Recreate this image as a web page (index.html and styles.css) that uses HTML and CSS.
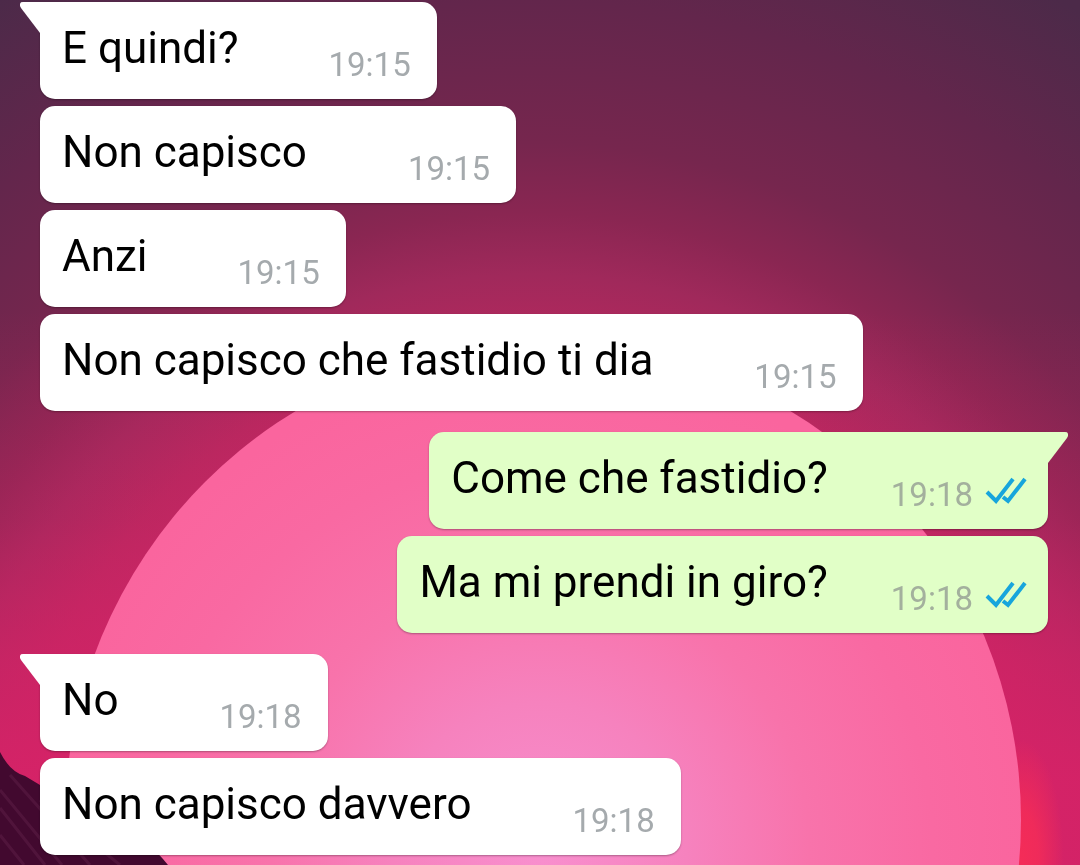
FILE: index.html
```html
<!DOCTYPE html>
<html lang="it">
<head>
    <meta charset="UTF-8">
    <meta name="viewport" content="width=device-width, initial-scale=1.0">
    <title>Chat</title>
    <link rel="stylesheet" href="styles.css">
</head>
<body>
    <!-- Sfondo -->
    <svg class="wallpaper" viewBox="0 0 1080 865" preserveAspectRatio="xMidYMid slice" aria-hidden="true">
        <defs>
            <radialGradient id="sky" gradientUnits="userSpaceOnUse" cx="530" cy="860" r="1010">
                <stop offset="0.45" stop-color="#be2862"/>
                <stop offset="0.51" stop-color="#b5285e"/>
                <stop offset="0.58" stop-color="#a0295b"/>
                <stop offset="0.64" stop-color="#8a2652"/>
                <stop offset="0.71" stop-color="#76264e"/>
                <stop offset="0.85" stop-color="#63264c"/>
                <stop offset="1" stop-color="#4c2a49"/>
            </radialGradient>
            <linearGradient id="dusk" x1="0" y1="0" x2="0" y2="1">
                <stop offset="0.36" stop-color="#d82268" stop-opacity="0"/>
                <stop offset="0.6" stop-color="#d82268" stop-opacity="0.25"/>
                <stop offset="0.76" stop-color="#d82268" stop-opacity="0.65"/>
                <stop offset="0.9" stop-color="#d82268" stop-opacity="0.9"/>
            </linearGradient>
            <radialGradient id="sun" gradientUnits="userSpaceOnUse" cx="540" cy="850" r="490">
                <stop offset="0" stop-color="#f88fce"/>
                <stop offset="0.3" stop-color="#f682be"/>
                <stop offset="0.55" stop-color="#f873ab"/>
                <stop offset="0.8" stop-color="#f969a2"/>
                <stop offset="1" stop-color="#fa659e"/>
            </radialGradient>
            <radialGradient id="glow" gradientUnits="userSpaceOnUse" cx="1022" cy="860" r="120" gradientTransform="translate(664 0) scale(0.35 1)">
                <stop offset="0" stop-color="#f42c58"/>
                <stop offset="0.4" stop-color="#f42c58" stop-opacity="0.85"/>
                <stop offset="1" stop-color="#f42c58" stop-opacity="0"/>
            </radialGradient>
        </defs>
        <rect width="1080" height="865" fill="url(#sky)"/>
        <rect width="1080" height="865" fill="url(#dusk)"/>
        <rect x="970" y="735" width="110" height="130" fill="url(#glow)"/>
        <circle cx="543" cy="820" r="478" fill="url(#sun)"/>
        <path d="M0 752 Q10 772 25 776 L40 785 Q80 800 115 820 Q150 842 168 865 H0Z" fill="#42092f"/>
        <path d="M0 790 L62 865 M0 808 L45 865 M10 775 L90 865 M0 835 L24 865 M40 800 L120 865" stroke="#66264f" stroke-width="3" opacity="0.4"/>
    </svg>

    <svg class="symbols" aria-hidden="true">
        <symbol id="tail" viewBox="0 0 22 33">
            <path d="M22 0 H3 Q-1 0 0 4 L1 6 L20 31 H22Z"/>
        </symbol>
        <symbol id="read" viewBox="0 0 42 30">
            <path d="M2 15 L11 24 L28 2 M18 20 L23 24 L40 2"/>
        </symbol>
    </svg>

    <main class="chat">
        <section class="group incoming">
            <div class="message first compact">
                <svg class="tail" aria-hidden="true"><use href="#tail"/></svg>
                <p class="text">E quindi?</p>
                <time class="time">19:15</time>
            </div>
            <div class="message">
                <p class="text">Non capisco</p>
                <time class="time">19:15</time>
            </div>
            <div class="message compact">
                <p class="text">Anzi</p>
                <time class="time">19:15</time>
            </div>
            <div class="message">
                <p class="text">Non capisco che fastidio ti dia</p>
                <time class="time">19:15</time>
            </div>
        </section>

        <section class="group outgoing">
            <div class="message first">
                <svg class="tail" aria-hidden="true"><use href="#tail"/></svg>
                <p class="text">Come che fastidio?</p>
                <time class="time">19:18</time>
                <svg class="read" role="img" aria-label="Letto"><use href="#read"/></svg>
            </div>
            <div class="message">
                <p class="text">Ma mi prendi in giro?</p>
                <time class="time">19:18</time>
                <svg class="read" role="img" aria-label="Letto"><use href="#read"/></svg>
            </div>
        </section>

        <section class="group incoming">
            <div class="message first">
                <svg class="tail" aria-hidden="true"><use href="#tail"/></svg>
                <p class="text">No</p>
                <time class="time">19:18</time>
            </div>
            <div class="message">
                <p class="text">Non capisco davvero</p>
                <time class="time">19:18</time>
            </div>
        </section>
    </main>
</body>
</html>
```

FILE: styles.css
```css
* {
    margin: 0;
    padding: 0;
    box-sizing: border-box;
}

body {
    font-family: Roboto, 'Liberation Sans', sans-serif;
    background: #62264c;
    color: #000;
}

/* Sfondo */
.wallpaper {
    position: fixed;
    inset: 0;
    width: 100%;
    height: 100%;
    z-index: -1;
}

.symbols {
    position: absolute;
    width: 0;
    height: 0;
}

/* Messaggi */
.chat {
    display: flex;
    flex-direction: column;
    gap: 21px;
    padding: 2px 32px 10px 40px;
}

.group {
    display: flex;
    flex-direction: column;
    align-items: flex-start;
    gap: 7px;
}

.outgoing {
    align-items: flex-end;
}

.message {
    position: relative;
    display: flex;
    align-items: flex-end;
    padding: 20px 26px 14px 22px;
    border-radius: 15px;
    background: #fff;
    box-shadow: 0 1px 2px rgba(0, 0, 0, 0.3);
}

.outgoing .message {
    padding-right: 21px;
    background: #e1ffc7;
}

.incoming .first {
    border-top-left-radius: 0;
}

.outgoing .first {
    border-top-right-radius: 0;
}

.text {
    margin-right: 101px;
    padding-bottom: 11px;
    font-size: 44px;
    line-height: 52px;
}

.compact .text {
    margin-right: 90px;
}

.outgoing .text {
    margin-right: 63px;
}

.time {
    color: #a5aaad;
    font-size: 33px;
    line-height: 40px;
}

.outgoing .time {
    color: #a3b09d;
}

.tail {
    position: absolute;
    top: 0;
    left: -20px;
    width: 22px;
    height: 33px;
    fill: #fff;
}

.outgoing .tail {
    left: auto;
    right: -20px;
    fill: #e1ffc7;
    transform: scaleX(-1);
}

.read {
    width: 42px;
    height: 30px;
    margin: 0 0 8px 12px;
    fill: none;
    stroke: #17a5dc;
    stroke-width: 4;
}
```
